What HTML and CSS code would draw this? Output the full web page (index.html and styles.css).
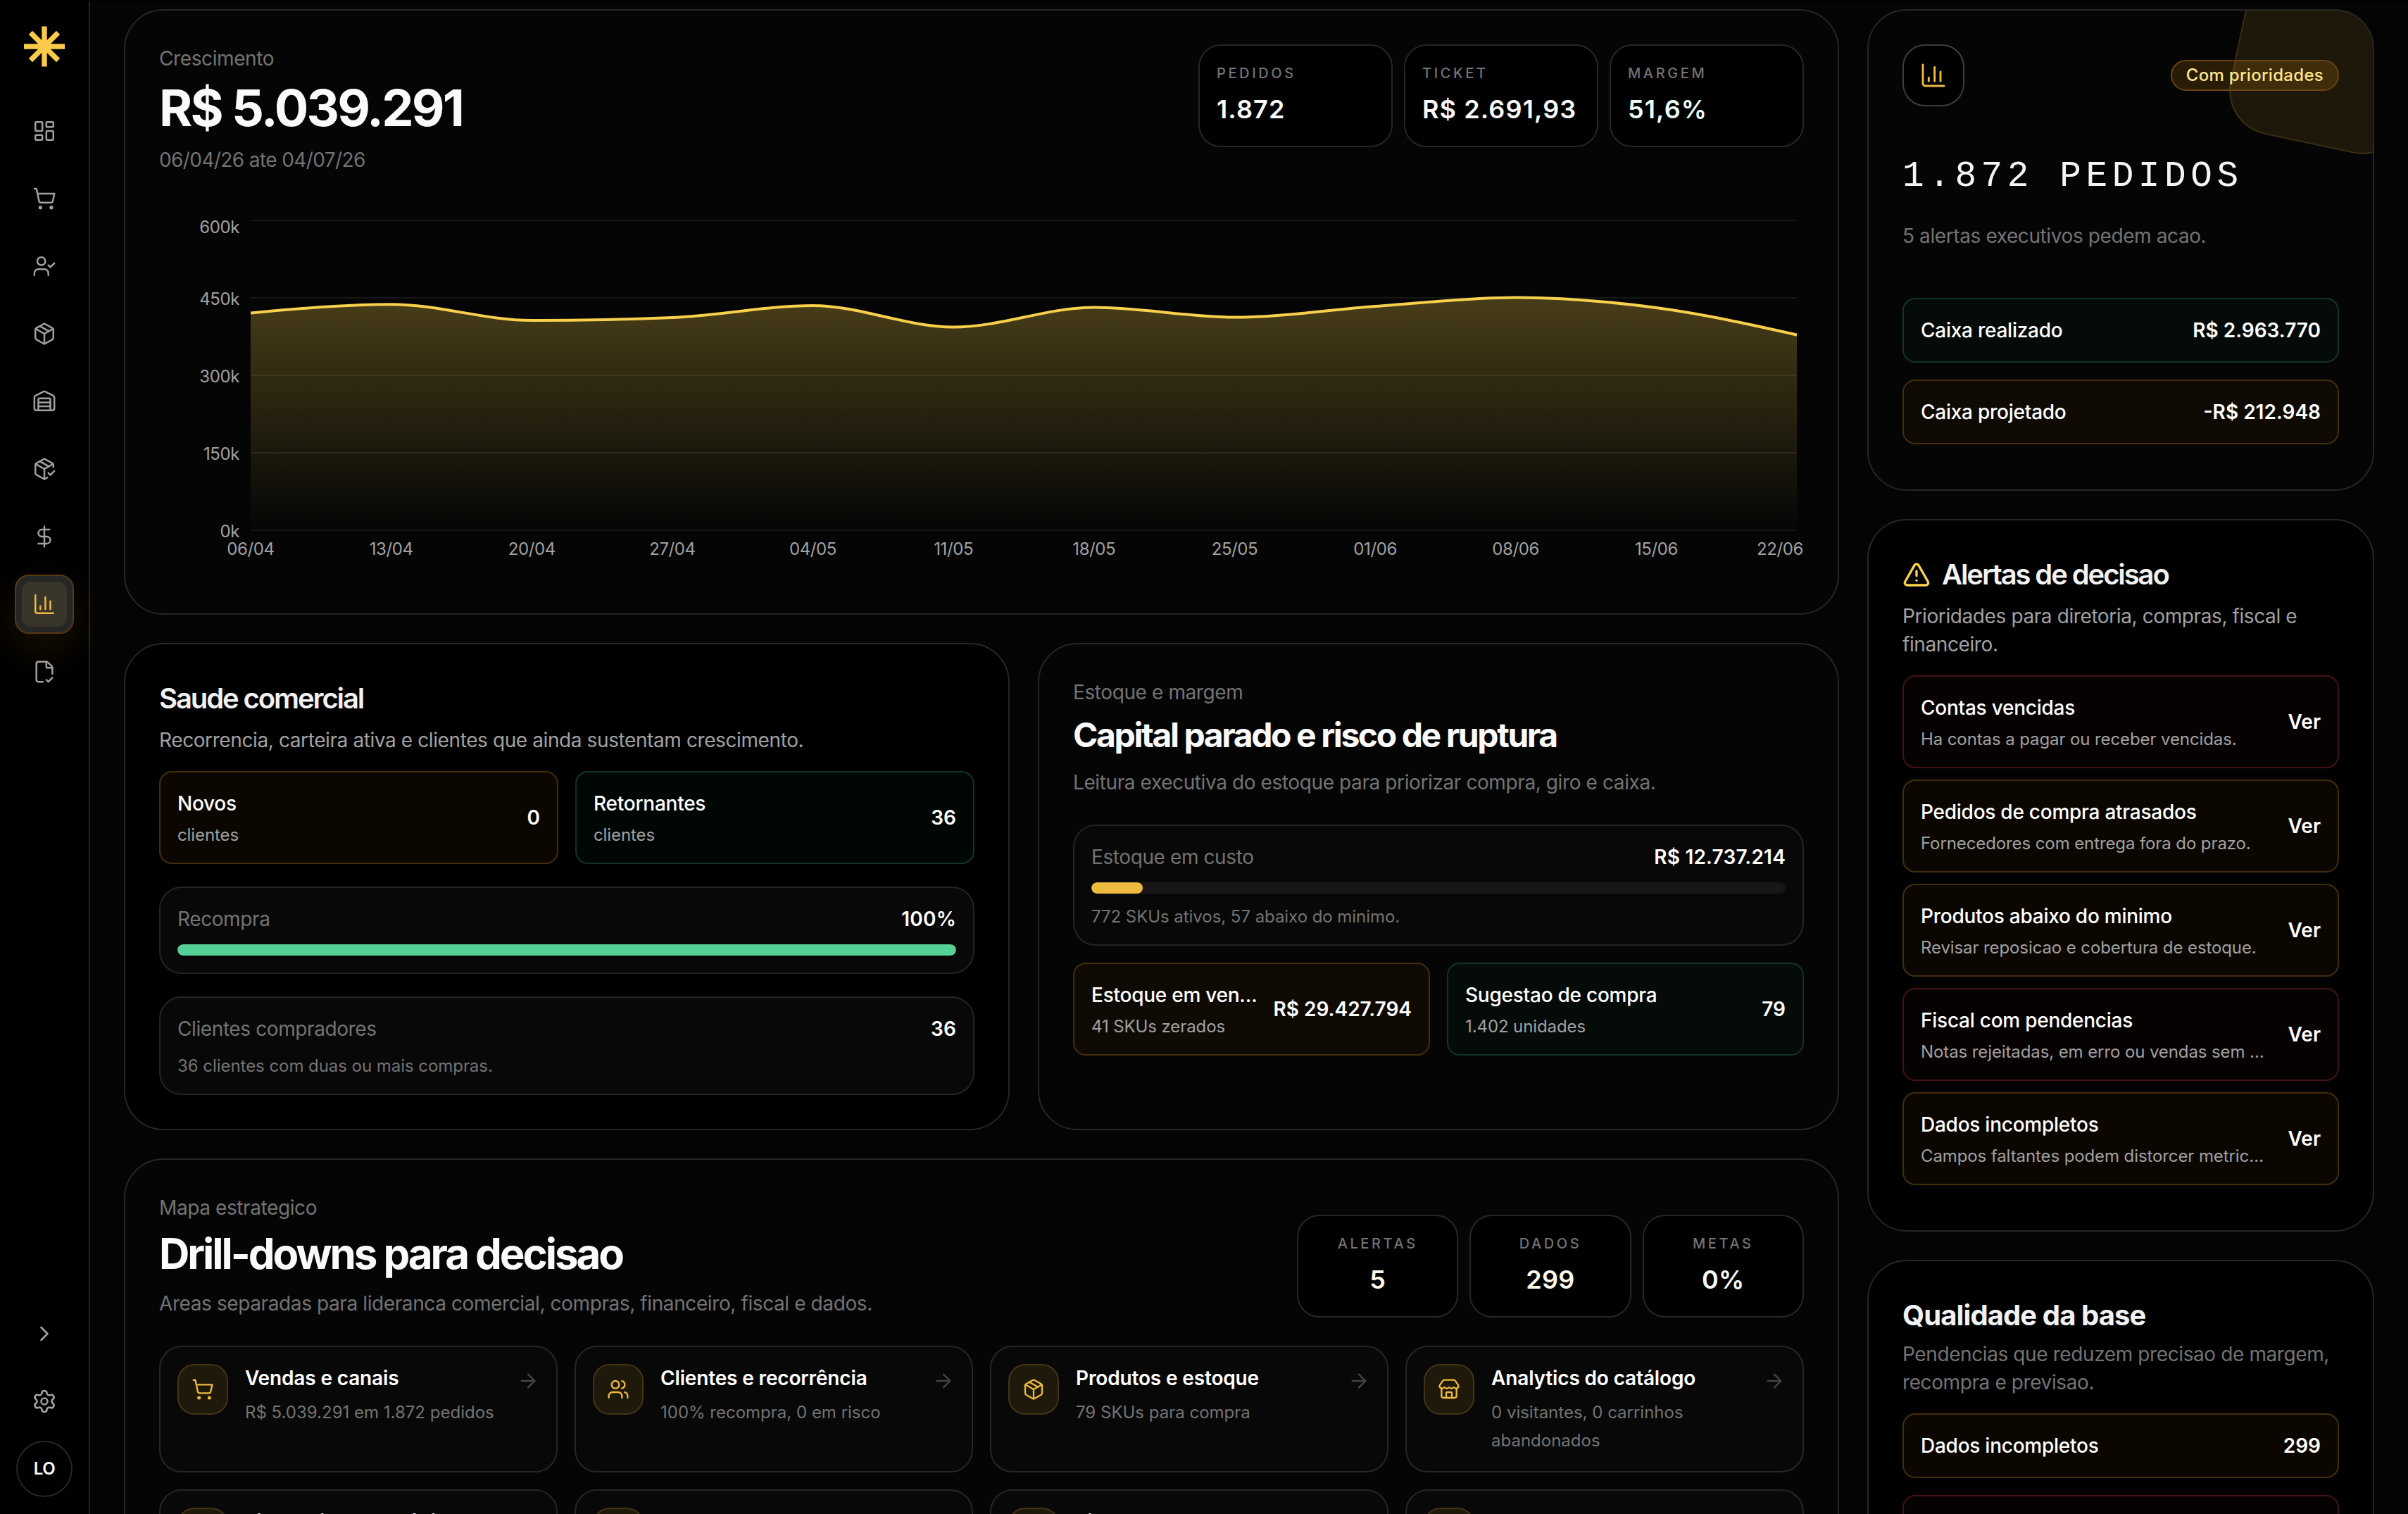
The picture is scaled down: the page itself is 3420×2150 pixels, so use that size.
FILE: index.html
```html
<!DOCTYPE html>
<html lang="pt-BR">
<head>
  <meta charset="UTF-8" />
  <title>Painel executivo</title>
  <link rel="stylesheet" href="styles.css">
</head>
<body>

  <!-- icones -->
  <svg class="sprite" aria-hidden="true">
    <symbol id="i-dashboard" viewBox="0 0 24 24"><rect x="3" y="3" width="7" height="9" rx="1"/><rect x="14" y="3" width="7" height="5" rx="1"/><rect x="14" y="12" width="7" height="9" rx="1"/><rect x="3" y="16" width="7" height="5" rx="1"/></symbol>
    <symbol id="i-cart" viewBox="0 0 24 24"><circle cx="8" cy="21" r="1"/><circle cx="19" cy="21" r="1"/><path d="M2.05 2.05h2l2.66 12.42a2 2 0 0 0 2 1.58h9.78a2 2 0 0 0 1.95-1.57l1.65-7.43H5.12"/></symbol>
    <symbol id="i-user-check" viewBox="0 0 24 24"><path d="m16 11 2 2 4-4"/><path d="M16 21v-2a4 4 0 0 0-4-4H6a4 4 0 0 0-4 4v2"/><circle cx="9" cy="7" r="4"/></symbol>
    <symbol id="i-package" viewBox="0 0 24 24"><path d="M11 21.73a2 2 0 0 0 2 0l7-4A2 2 0 0 0 21 16V8a2 2 0 0 0-1-1.73l-7-4a2 2 0 0 0-2 0l-7 4A2 2 0 0 0 3 8v8a2 2 0 0 0 1 1.73z"/><path d="M12 22V12"/><path d="M3.29 7 12 12l8.71-5"/><path d="m7.5 4.27 9 5.15"/></symbol>
    <symbol id="i-warehouse" viewBox="0 0 24 24"><path d="M18 21V10a1 1 0 0 0-1-1H7a1 1 0 0 0-1 1v11"/><path d="M22 19a2 2 0 0 1-2 2H4a2 2 0 0 1-2-2V8a2 2 0 0 1 1.132-1.803l7.95-3.974a2 2 0 0 1 1.837 0l7.948 3.974A2 2 0 0 1 22 8z"/><path d="M6 13h12"/><path d="M6 17h12"/></symbol>
    <symbol id="i-package-check" viewBox="0 0 24 24"><path d="m16 16 2 2 4-4"/><path d="M21 10V8a2 2 0 0 0-1-1.73l-7-4a2 2 0 0 0-2 0l-7 4A2 2 0 0 0 3 8v8a2 2 0 0 0 1 1.73l7 4a2 2 0 0 0 2 0l2-1.14"/><path d="m7.5 4.27 9 5.15"/><path d="M3.29 7 12 12l8.71-5"/><path d="M12 22V12"/></symbol>
    <symbol id="i-dollar" viewBox="0 0 24 24"><path d="M12 2v20"/><path d="M17 5H9.5a3.5 3.5 0 0 0 0 7h5a3.5 3.5 0 0 1 0 7H6"/></symbol>
    <symbol id="i-chart" viewBox="0 0 24 24"><path d="M3 3v16a2 2 0 0 0 2 2h16"/><path d="M18 17V9"/><path d="M13 17V5"/><path d="M8 17v-3"/></symbol>
    <symbol id="i-file-check" viewBox="0 0 24 24"><path d="M10.5 22H6a2 2 0 0 1-2-2V4a2 2 0 0 1 2-2h8a2.4 2.4 0 0 1 1.706.706l3.588 3.588A2.4 2.4 0 0 1 20 8v6"/><path d="M14 2v5a1 1 0 0 0 1 1h5"/><path d="m14 20 2 2 4-4"/></symbol>
    <symbol id="i-chevron" viewBox="0 0 24 24"><path d="m9 18 6-6-6-6"/></symbol>
    <symbol id="i-settings" viewBox="0 0 24 24"><path d="M9.671 4.136a2.34 2.34 0 0 1 4.659 0 2.34 2.34 0 0 0 3.319 1.915 2.34 2.34 0 0 1 2.33 4.033 2.34 2.34 0 0 0 0 3.831 2.34 2.34 0 0 1-2.33 4.033 2.34 2.34 0 0 0-3.319 1.915 2.34 2.34 0 0 1-4.659 0 2.34 2.34 0 0 0-3.32-1.915 2.34 2.34 0 0 1-2.33-4.033 2.34 2.34 0 0 0 0-3.831A2.34 2.34 0 0 1 6.35 6.051a2.34 2.34 0 0 0 3.319-1.915"/><circle cx="12" cy="12" r="3"/></symbol>
    <symbol id="i-alert" viewBox="0 0 24 24"><path d="m21.73 18-8-14a2 2 0 0 0-3.48 0l-8 14A2 2 0 0 0 4 21h16a2 2 0 0 0 1.73-3"/><path d="M12 9v4"/><path d="M12 17h.01"/></symbol>
    <symbol id="i-users" viewBox="0 0 24 24"><path d="M16 21v-2a4 4 0 0 0-4-4H6a4 4 0 0 0-4 4v2"/><path d="M16 3.128a4 4 0 0 1 0 7.744"/><path d="M22 21v-2a4 4 0 0 0-3-3.87"/><circle cx="9" cy="7" r="4"/></symbol>
    <symbol id="i-store" viewBox="0 0 24 24"><path d="M15 21v-5a1 1 0 0 0-1-1h-4a1 1 0 0 0-1 1v5"/><path d="M17.774 10.31a1.12 1.12 0 0 0-1.549 0 2.5 2.5 0 0 1-3.451 0 1.12 1.12 0 0 0-1.548 0 2.5 2.5 0 0 1-3.452 0 1.12 1.12 0 0 0-1.549 0 2.5 2.5 0 0 1-3.77-3.248l2.889-4.184A2 2 0 0 1 7 2h10a2 2 0 0 1 1.653.873l2.895 4.192a2.5 2.5 0 0 1-3.774 3.244"/><path d="M4 10.95V19a2 2 0 0 0 2 2h12a2 2 0 0 0 2-2v-8.05"/></symbol>
    <symbol id="i-arrow" viewBox="0 0 24 24"><path d="M5 12h14"/><path d="m12 5 7 7-7 7"/></symbol>
  </svg>

  <div class="layout">
    <aside class="sidebar">
      <svg class="logo" viewBox="-29 -29 58 58"><path d="M0-28.5V28.5M-29 0H29M-19.6-19.6 19.6 19.6M19.6-19.6-19.6 19.6"/></svg>
      <nav class="nav">
        <a class="nav-item"><svg class="icon"><use href="#i-dashboard"/></svg></a>
        <a class="nav-item"><svg class="icon"><use href="#i-cart"/></svg></a>
        <a class="nav-item"><svg class="icon"><use href="#i-user-check"/></svg></a>
        <a class="nav-item"><svg class="icon"><use href="#i-package"/></svg></a>
        <a class="nav-item"><svg class="icon"><use href="#i-warehouse"/></svg></a>
        <a class="nav-item"><svg class="icon"><use href="#i-package-check"/></svg></a>
        <a class="nav-item"><svg class="icon"><use href="#i-dollar"/></svg></a>
        <a class="nav-item active"><span class="nav-inner"><svg class="icon"><use href="#i-chart"/></svg></span></a>
        <a class="nav-item"><svg class="icon"><use href="#i-file-check"/></svg></a>
      </nav>
      <div class="nav nav-bottom">
        <a class="nav-item"><svg class="icon"><use href="#i-chevron"/></svg></a>
        <a class="nav-item"><svg class="icon"><use href="#i-settings"/></svg></a>
        <div class="avatar">LO</div>
      </div>
    </aside>

    <main class="content">
      <div class="main-col">

        <section class="card growth">
          <div class="card-head">
            <div>
              <p class="muted">Crescimento</p>
              <h1 class="big-value">R$ 5.039.291</h1>
              <p class="muted date">06/04/26 ate 04/07/26</p>
            </div>
            <div class="kpis">
              <div class="kpi"><span>PEDIDOS</span><strong>1.872</strong></div>
              <div class="kpi"><span>TICKET</span><strong>R$ 2.691,93</strong></div>
              <div class="kpi"><span>MARGEM</span><strong class="t-green">51,6%</strong></div>
            </div>
          </div>
          <svg class="chart" viewBox="0 0 2336 520">
            <defs>
              <linearGradient id="area" x1="0" y1="0" x2="0" y2="1">
                <stop offset="0" stop-color="#f5d04c" stop-opacity=".28"/>
                <stop offset="1" stop-color="#f5d04c" stop-opacity="0"/>
              </linearGradient>
            </defs>
            <g transform="translate(130 26)">
              <path class="grid-line" d="M0 0H2196M0 110H2196M0 220H2196M0 330H2196M0 440H2196"/>
              <path fill="url(#area)" d="M0 131.5C66.5 125.4 133.1 119.3 199.6 119.3C266.2 119.3 332.7 142 399.3 142C465.8 142 532.4 140.7 598.9 138C665.5 135.3 732 121 798.5 121C865.1 121 931.6 151.5 998.2 151.5C1064.7 151.5 1131.3 123.5 1197.8 123.5C1264.4 123.5 1330.9 137.5 1397.5 137.5C1464 137.5 1530.6 126.7 1597.1 122C1663.6 117.3 1730.2 109.5 1796.7 109.5C1863.3 109.5 1929.8 115.2 1996.4 124C2062.9 132.8 2129.5 147.7 2196 162.5V440H0Z"/>
              <path class="chart-line" d="M0 131.5C66.5 125.4 133.1 119.3 199.6 119.3C266.2 119.3 332.7 142 399.3 142C465.8 142 532.4 140.7 598.9 138C665.5 135.3 732 121 798.5 121C865.1 121 931.6 151.5 998.2 151.5C1064.7 151.5 1131.3 123.5 1197.8 123.5C1264.4 123.5 1330.9 137.5 1397.5 137.5C1464 137.5 1530.6 126.7 1597.1 122C1663.6 117.3 1730.2 109.5 1796.7 109.5C1863.3 109.5 1929.8 115.2 1996.4 124C2062.9 132.8 2129.5 147.7 2196 162.5"/>
            </g>
            <g class="axis axis-y">
              <text x="114" y="44">600k</text>
              <text x="114" y="146">450k</text>
              <text x="114" y="256">300k</text>
              <text x="114" y="366">150k</text>
              <text x="114" y="476">0k</text>
            </g>
            <g class="axis axis-x">
              <text x="130" y="501">06/04</text>
              <text x="329.6" y="501">13/04</text>
              <text x="529.3" y="501">20/04</text>
              <text x="728.9" y="501">27/04</text>
              <text x="928.5" y="501">04/05</text>
              <text x="1128.2" y="501">11/05</text>
              <text x="1327.8" y="501">18/05</text>
              <text x="1527.5" y="501">25/05</text>
              <text x="1727.1" y="501">01/06</text>
              <text x="1926.7" y="501">08/06</text>
              <text x="2126.4" y="501">15/06</text>
              <text x="2302" y="501">22/06</text>
            </g>
          </svg>
        </section>

        <div class="split">
          <section class="card solid">
            <h2 class="card-title">Saude comercial</h2>
            <p class="desc">Recorrencia, carteira ativa e clientes que ainda sustentam crescimento.</p>
            <div class="tiles two">
              <div class="tile amber"><div class="tile-text"><b>Novos</b><small>clientes</small></div><strong>0</strong></div>
              <div class="tile green"><div class="tile-text"><b>Retornantes</b><small>clientes</small></div><strong>36</strong></div>
            </div>
            <div class="box">
              <div class="row"><span>Recompra</span><strong>100%</strong></div>
              <div class="bar"><div class="fill green" style="width: 100%"></div></div>
            </div>
            <div class="box">
              <div class="row"><span>Clientes compradores</span><strong>36</strong></div>
              <p class="note">36 clientes com duas ou mais compras.</p>
            </div>
          </section>

          <section class="card stock">
            <p class="muted">Estoque e margem</p>
            <h2 class="mid-title">Capital parado e risco de ruptura</h2>
            <p class="muted">Leitura executiva do estoque para priorizar compra, giro e caixa.</p>
            <div class="box">
              <div class="row"><span>Estoque em custo</span><strong>R$ 12.737.214</strong></div>
              <div class="bar"><div class="fill amber" style="width: 7.4%"></div></div>
              <p class="note">772 SKUs ativos, 57 abaixo do minimo.</p>
            </div>
            <div class="tiles two">
              <div class="tile amber"><div class="tile-text"><b>Estoque em venda</b><small>41 SKUs zerados</small></div><strong>R$ 29.427.794</strong></div>
              <div class="tile green"><div class="tile-text"><b>Sugestao de compra</b><small>1.402 unidades</small></div><strong>79</strong></div>
            </div>
          </section>
        </div>

        <section class="card map">
          <div class="card-head bottom">
            <div>
              <p class="muted">Mapa estrategico</p>
              <h2 class="map-title">Drill-downs para decisao</h2>
              <p class="muted">Areas separadas para lideranca comercial, compras, financeiro, fiscal e dados.</p>
            </div>
            <div class="kpis small">
              <div class="kpi"><span>ALERTAS</span><strong class="t-amber">5</strong></div>
              <div class="kpi"><span>DADOS</span><strong class="t-amber">299</strong></div>
              <div class="kpi"><span>METAS</span><strong>0%</strong></div>
            </div>
          </div>
          <div class="drills">
            <a class="drill"><span class="drill-icon"><svg class="icon"><use href="#i-cart"/></svg></span><div><b>Vendas e canais</b><p>R$ 5.039.291 em 1.872 pedidos</p></div><svg class="icon arrow"><use href="#i-arrow"/></svg></a>
            <a class="drill"><span class="drill-icon"><svg class="icon"><use href="#i-users"/></svg></span><div><b>Clientes e recorrência</b><p>100% recompra, 0 em risco</p></div><svg class="icon arrow"><use href="#i-arrow"/></svg></a>
            <a class="drill"><span class="drill-icon"><svg class="icon"><use href="#i-package"/></svg></span><div><b>Produtos e estoque</b><p>79 SKUs para compra</p></div><svg class="icon arrow"><use href="#i-arrow"/></svg></a>
            <a class="drill"><span class="drill-icon"><svg class="icon"><use href="#i-store"/></svg></span><div><b>Analytics do catálogo</b><p>0 visitantes, 0 carrinhos abandonados</p></div><svg class="icon arrow"><use href="#i-arrow"/></svg></a>
            <a class="drill"><span class="drill-icon"></span><div><b>Financeiro e contábil</b></div></a>
            <a class="drill"><span class="drill-icon"></span><div></div></a>
            <a class="drill"><span class="drill-icon"></span><div><b>Fiscal</b></div></a>
            <a class="drill"><span class="drill-icon"></span><div></div></a>
          </div>
        </section>
      </div>

      <div class="side-col">
        <section class="card summary">
          <div class="shape"></div>
          <div class="summary-head">
            <span class="summary-icon"><svg class="icon"><use href="#i-chart"/></svg></span>
            <span class="pill">Com prioridades</span>
          </div>
          <h2 class="mono">1.872 PEDIDOS</h2>
          <p class="muted">5 alertas executivos pedem acao.</p>
          <div class="tiles">
            <div class="tile green"><div class="tile-text"><b>Caixa realizado</b></div><strong>R$ 2.963.770</strong></div>
            <div class="tile amber"><div class="tile-text"><b>Caixa projetado</b></div><strong>-R$ 212.948</strong></div>
          </div>
        </section>

        <section class="card solid alerts">
          <h2 class="card-title"><svg class="icon"><use href="#i-alert"/></svg>Alertas de decisao</h2>
          <p class="desc">Prioridades para diretoria, compras, fiscal e financeiro.</p>
          <div class="tiles tight">
            <div class="tile red"><div class="tile-text"><b>Contas vencidas</b><small>Ha contas a pagar ou receber vencidas.</small></div><strong>Ver</strong></div>
            <div class="tile amber"><div class="tile-text"><b>Pedidos de compra atrasados</b><small>Fornecedores com entrega fora do prazo.</small></div><strong>Ver</strong></div>
            <div class="tile amber"><div class="tile-text"><b>Produtos abaixo do minimo</b><small>Revisar reposicao e cobertura de estoque.</small></div><strong>Ver</strong></div>
            <div class="tile red"><div class="tile-text"><b>Fiscal com pendencias</b><small>Notas rejeitadas, em erro ou vendas sem nota.</small></div><strong>Ver</strong></div>
            <div class="tile amber"><div class="tile-text"><b>Dados incompletos</b><small>Campos faltantes podem distorcer metricas.</small></div><strong>Ver</strong></div>
          </div>
        </section>

        <section class="card solid quality">
          <h2 class="card-title">Qualidade da base</h2>
          <p class="muted">Pendencias que reduzem precisao de margem, recompra e previsao.</p>
          <div class="tiles">
            <div class="tile amber"><div class="tile-text"><b>Dados incompletos</b></div><strong>299</strong></div>
            <div class="tile red"></div>
          </div>
        </section>
      </div>
    </main>
  </div>

</body>
</html>
```
FILE: styles.css
```css
* {
  box-sizing: border-box;
}
body {
  margin: 0;
  height: 2150px;
  overflow: hidden;
  background: #040404;
  color: #fafafa;
  font-family: Inter, "Liberation Sans", sans-serif;
  font-size: 28px;
  line-height: 40px;
  letter-spacing: -0.4px;
}
h1, h2, p {
  margin: 0;
}
.sprite {
  display: none;
}
.icon {
  width: 34px;
  height: 34px;
  flex-shrink: 0;
  fill: none;
  stroke: currentColor;
  stroke-width: 1.75;
  stroke-linecap: round;
  stroke-linejoin: round;
}
.layout {
  display: flex;
  height: 2150px;
  border-top: 2px solid #000;
}

/* menu lateral */
.sidebar {
  width: 128px;
  flex-shrink: 0;
  display: flex;
  flex-direction: column;
  align-items: center;
  padding: 35px 0 22px;
  background: #000;
  border-right: 2px solid #262626;
}
.logo {
  width: 58px;
  height: 58px;
  margin-bottom: 49px;
  stroke: #f9cb48;
  stroke-width: 7.4;
  flex-shrink: 0;
}
.nav {
  display: flex;
  flex-direction: column;
  align-items: center;
  gap: 12px;
}
.nav-bottom {
  margin-top: auto;
}
.nav-item {
  width: 84px;
  height: 84px;
  display: flex;
  align-items: center;
  justify-content: center;
  color: #a1a1a1;
}
.nav-item.active {
  background: #262626;
  border: 2px solid #573913;
  border-radius: 20px;
  color: #edb93f;
  box-shadow: 0 20px 60px rgba(245, 158, 11, 0.12);
}
.nav-inner {
  width: 64px;
  height: 64px;
  display: flex;
  align-items: center;
  justify-content: center;
  background: #39352a;
  border-radius: 14px;
}
.nav-bottom .icon {
  width: 36px;
  height: 36px;
}
.avatar {
  width: 80px;
  height: 80px;
  margin: 2px 0;
  border: 2px solid #262626;
  border-radius: 50%;
  text-align: center;
  font-size: 24px;
  font-weight: 600;
  line-height: 76px;
}

/* estrutura */
.content {
  flex: 1;
  display: flex;
  gap: 40px;
  padding: 11px 48px 0;
  overflow: hidden;
}
.main-col {
  width: 2436px;
}
.side-col {
  width: 720px;
}
.main-col, .side-col {
  display: flex;
  flex-direction: column;
  gap: 40px;
  flex-shrink: 0;
}
.card {
  position: relative;
  flex-shrink: 0;
  padding: 48px;
  background: #050505;
  border: 2px solid #262626;
  border-radius: 56px;
  overflow: hidden;
}
.card.solid {
  background: #000;
}
.card-head {
  display: flex;
  justify-content: space-between;
  align-items: flex-start;
}
.card-head.bottom {
  align-items: flex-end;
}
.muted {
  color: #737373;
}
.date {
  letter-spacing: -0.6px;
}
.desc {
  margin-top: 10px;
  color: #a1a1a1;
}
.card-title {
  display: flex;
  align-items: center;
  gap: 16px;
  font-size: 40px;
  font-weight: 600;
  line-height: 58px;
  letter-spacing: -2.1px;
  color: #f2f2f2;
}
.big-value {
  margin: 12px 0 16px;
  font-size: 72px;
  font-weight: 700;
  line-height: 76px;
  letter-spacing: -2.8px;
}
.mid-title {
  margin: 8px 0 14px;
  font-size: 48px;
  font-weight: 700;
  line-height: 66px;
  letter-spacing: -2.4px;
}
.map-title {
  margin: 8px 0 14px;
  font-size: 60px;
  font-weight: 700;
  line-height: 74px;
  letter-spacing: -3.05px;
}
.kpis {
  width: 860px;
  display: grid;
  grid-template-columns: repeat(3, 1fr);
  gap: 16px;
}
.kpis.small {
  width: 720px;
  text-align: center;
}
.kpi {
  padding: 24px;
  background: #000;
  border: 2px solid #262626;
  border-radius: 32px;
}
.kpi span {
  display: block;
  font-size: 20px;
  font-weight: 500;
  line-height: 30px;
  letter-spacing: 0.18em;
  color: #737373;
}
.kpi strong {
  display: block;
  margin-top: 8px;
  font-size: 36px;
  font-weight: 600;
  line-height: 56px;
  letter-spacing: 1.1px;
  white-space: nowrap;
}
.kpis.small strong {
  letter-spacing: 0.3px;
}
.kpi .t-green {
  color: #ecfdf5;
}
.kpi .t-amber {
  color: #fffbeb;
}

/* grafico */
.growth {
  height: 860px;
}
.chart {
  display: block;
  width: 2336px;
  height: 520px;
  margin-top: 40px;
}
.grid-line {
  fill: none;
  stroke: #fff;
  stroke-opacity: 0.07;
  stroke-width: 2;
}
.chart-line {
  fill: none;
  stroke: #f8d04c;
  stroke-width: 4;
}
.axis text {
  font-size: 24px;
  fill: #a1a1a1;
}
.axis-y text {
  text-anchor: end;
}
.axis-x text {
  text-anchor: middle;
}

/* caixas */
.split {
  display: grid;
  grid-template-columns: 1258px 1138px;
  gap: 40px;
}
.tiles {
  display: grid;
  gap: 24px;
  margin-top: 24px;
}
.tiles.two {
  grid-template-columns: 1fr 1fr;
}
.tiles.tight {
  gap: 16px;
}
.tile {
  min-width: 0;
  min-height: 92px;
  display: flex;
  align-items: center;
  justify-content: space-between;
  gap: 24px;
  padding: 24px;
  border: 2px solid;
  border-radius: 18px;
  color: #fff;
}
.stock .tile {
  gap: 20px;
}
.tile.amber {
  background: rgba(245, 158, 11, 0.045);
  border-color: #432d0b;
}
.tile.green {
  background: rgba(16, 185, 129, 0.035);
  border-color: #12332a;
}
.tile.red {
  background: rgba(239, 68, 68, 0.03);
  border-color: #421214;
}
.tile-text {
  min-width: 0;
}
.tile b {
  display: block;
  font-weight: 500;
  letter-spacing: -0.25px;
  overflow: hidden;
  text-overflow: ellipsis;
  white-space: nowrap;
}
.tile small {
  display: block;
  margin: 9px 0 -1px;
  font-size: 24px;
  line-height: 32px;
  letter-spacing: -0.1px;
  color: #a1a1a1;
  overflow: hidden;
  text-overflow: ellipsis;
  white-space: nowrap;
}
.tile strong {
  font-weight: 600;
  letter-spacing: 0;
  white-space: nowrap;
}
.box {
  margin-top: 32px;
  padding: 24px;
  background: #080808;
  border: 2px solid #242424;
  border-radius: 32px;
}
.stock .box {
  margin-top: 40px;
}
.row {
  display: flex;
  justify-content: space-between;
  color: #737373;
}
.row strong {
  font-weight: 600;
  letter-spacing: 0.2px;
  color: #fff;
}
.bar {
  height: 16px;
  margin-top: 16px;
  background: #171717;
  border-radius: 8px;
  overflow: hidden;
}
.fill {
  height: 16px;
  border-radius: 8px;
}
.fill.green {
  background: #55d196;
}
.fill.amber {
  background: #edb93f;
}
.note {
  margin: 17px 0 -1px;
  font-size: 24px;
  line-height: 32px;
  letter-spacing: -0.05px;
  color: #737373;
}

/* mapa estrategico */
.drills {
  display: grid;
  grid-template-columns: repeat(4, 1fr);
  gap: 24px;
  margin-top: 40px;
}
.drill {
  height: 180px;
  display: flex;
  gap: 24px;
  padding: 24px;
  background: #080808;
  border: 2px solid #262626;
  border-radius: 32px;
}
.drill div {
  flex: 1;
}
.drill b {
  display: block;
  font-weight: 600;
  letter-spacing: -0.15px;
  color: #fff;
}
.drill p {
  margin-top: 9px;
  font-size: 24px;
  letter-spacing: 0;
  color: #737373;
}
.drill-icon {
  width: 72px;
  height: 72px;
  flex-shrink: 0;
  display: flex;
  align-items: center;
  justify-content: center;
  background: #1f190c;
  border: 2px solid #443414;
  border-radius: 24px;
  color: #edb93f;
}
.drill .icon {
  width: 32px;
  height: 32px;
}
.drill .arrow {
  margin-top: 8px;
  color: #454545;
}

/* coluna direita */
.summary {
  height: 684px;
}
.shape {
  position: absolute;
  top: -64px;
  right: -64px;
  width: 256px;
  height: 256px;
  background: rgba(245, 190, 65, 0.105);
  border: 2px solid rgba(245, 190, 65, 0.13);
  border-radius: 64px;
  transform: rotate(12deg);
}
.summary-head {
  position: relative;
  display: flex;
  justify-content: space-between;
  align-items: center;
}
.summary-icon {
  width: 88px;
  height: 88px;
  display: flex;
  align-items: center;
  justify-content: center;
  background: #000;
  border: 2px solid #3d3d3d;
  border-radius: 32px;
  color: #edb93f;
}
.summary-icon .icon {
  width: 40px;
  height: 40px;
}
.pill {
  padding: 0 20px;
  background: rgba(245, 158, 11, 0.15);
  border: 2px solid #6b4410;
  border-radius: 22px;
  font-size: 24px;
  font-weight: 500;
  letter-spacing: 0.3px;
  color: #fde68a;
}
.mono {
  margin: 68px 0 32px;
  font-family: "Liberation Mono", monospace;
  font-size: 51px;
  font-weight: 400;
  line-height: 64px;
  letter-spacing: 6.6px;
  color: #f5f5f5;
}
.summary .tiles {
  margin-top: 68px;
}
.alerts {
  padding-bottom: 64px;
}
.alerts .card-title .icon {
  width: 40px;
  height: 40px;
  color: #fcd34d;
  stroke-width: 2;
}
.quality .card-title {
  font-weight: 700;
  letter-spacing: -0.9px;
}
.quality .muted {
  margin-top: 6px;
}
```
